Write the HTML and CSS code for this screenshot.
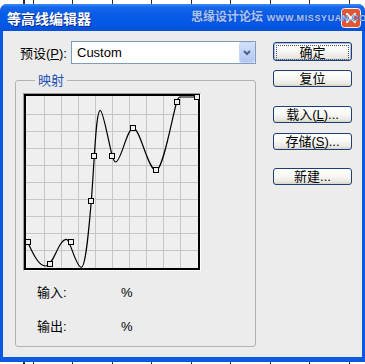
FILE: index.html
```html
<!DOCTYPE html>
<html lang="zh-CN">
<head>
  <meta charset="UTF-8">
  <title>等高线编辑器</title>
  <link rel="stylesheet" href="styles.css">
</head>
<body>
  <div class="window">
    <div class="titlebar">
      <span class="title">等高线编辑器</span>
      <span class="close">
        <svg width="20" height="20" viewBox="0 0 20 20">
          <rect x="0.5" y="0.5" width="19" height="19" rx="3" fill="#E2572F" stroke="#F4F4F4"/>
          <path d="M6 6 L14 14 M14 6 L6 14" stroke="#fff" stroke-width="2.2" stroke-linecap="round"/>
        </svg>
      </span>
      <span class="watermark">思缘设计论坛 <small>WWW.MISSYUAN.COM</small></span>
    </div>

    <div class="client">
      <div class="main">
        <div class="preset">
          <label>预设(<u>P</u>):</label>
          <div class="combo">
            <span>Custom</span>
            <span class="combo-arrow">
              <svg width="16" height="21" viewBox="0 0 16 21">
                <defs>
                  <linearGradient id="arrowbg" x1="0" y1="0" x2="0" y2="1">
                    <stop offset="0" stop-color="#D3E0FC"/>
                    <stop offset="1" stop-color="#B2C6F4"/>
                  </linearGradient>
                </defs>
                <rect x="0.5" y="0.5" width="15" height="20" rx="2" fill="url(#arrowbg)" stroke="#C9D8F8"/>
                <path d="M5 9 L8 12 L11 9" fill="none" stroke="#4D6185" stroke-width="2"/>
              </svg>
            </span>
          </div>
        </div>

        <fieldset class="mapping">
          <legend>映射</legend>
          <div class="graph">
            <svg width="176" height="176" viewBox="0 0 176 176">
              <rect x="1" y="1" width="174" height="174" fill="#EFEFEF" stroke="#000" stroke-width="2"/>
              <g stroke="#C6C6C6" stroke-width="1">
                <path d="M20.5 2V174 M37.5 2V174 M54.5 2V174 M71.5 2V174 M88.5 2V174 M105.5 2V174 M122.5 2V174 M139.5 2V174 M156.5 2V174"/>
                <path d="M2 20.5H174 M2 37.5H174 M2 54.5H174 M2 71.5H174 M2 88.5H174 M2 105.5H174 M2 122.5H174 M2 139.5H174 M2 156.5H174"/>
              </g>
              <path fill="none" stroke="#000" stroke-width="1.2"
                d="M3.7,148.3 C8,157 14,172 21.5,172 C30,172 34,145.3 42.7,145.3 C46,145.3 52,173.3 57.3,173.3 C61.5,173.3 64.5,140 67.3,106.7 C68.5,92 69.3,77 70.3,62.3 C71.5,44 73,16.3 76.3,16.3 C79,16.3 84,45 88.3,62.3 C89.5,66 90.3,68 91.7,68 C97,68 103,34 109.3,34 C116,34 124,76.3 132,76.3 C139,76.3 148,24 152.7,8 C153.7,5 154.5,3 156,3 L173,3"/>
              <g fill="#EFEFEF" stroke="#000" stroke-width="1">
                <rect x="1.5" y="145.5" width="5" height="5"/>
                <rect x="23.5" y="167.5" width="5" height="5"/>
                <rect x="44.5" y="145.5" width="5" height="5"/>
                <rect x="64.5" y="104.5" width="5" height="5"/>
                <rect x="67.5" y="59.5" width="5" height="5"/>
                <rect x="85.5" y="59.5" width="5" height="5"/>
                <rect x="106.5" y="31.5" width="5" height="5"/>
                <rect x="129.5" y="73.5" width="5" height="5"/>
                <rect x="150.5" y="5.5" width="5" height="5"/>
                <rect x="170.5" y="0.5" width="5" height="5"/>
              </g>
            </svg>
          </div>
          <div class="readout">
            <span>输入:</span><span>%</span>
            <span>输出:</span><span>%</span>
          </div>
        </fieldset>
      </div>

      <div class="buttons">
        <button class="btn btn-default"><span>确定</span></button>
        <button class="btn btn-reset">复位</button>
        <button class="btn btn-load">载入(<u>L</u>)...</button>
        <button class="btn btn-save">存储(<u>S</u>)...</button>
        <button class="btn btn-new">新建...</button>
      </div>
    </div>
  </div>
</body>
</html>
```

FILE: styles.css
```css
html,
body {
  margin: 0;
}

body {
  width: 365px;
  height: 364px;
  overflow: hidden;
  background: repeating-linear-gradient(90deg, #2a2a2a 0 1px, #fff 1px 39.5px);
  background-position: 33px 0;
  font-family: "Liberation Sans", "Noto Sans CJK SC", sans-serif;
  font-size: 13px;
  color: #000;
}

.window {
  box-sizing: border-box;
  width: 365px;
  height: 358px;
  margin-top: 4px;
  padding: 0 3px 5px;
  background: #0A5BE2;
  border-radius: 7px 7px 0 0;
  display: flex;
  flex-direction: column;
}

.titlebar {
  position: relative;
  height: 27px;
  margin: 0 -3px;
  padding: 0 4px 0 7px;
  display: flex;
  align-items: center;
  border-radius: 7px 7px 0 0;
  background: linear-gradient(to bottom, #3C8DF6 0, #1668EC 3px, #0A5DE6 10px, #0558E4 20px, #0350DA 27px);
}

.title {
  flex: 1;
  color: #fff;
  font-family: "Noto Sans CJK SC", sans-serif;
  font-size: 14px;
  font-weight: bold;
  line-height: 16px;
  text-shadow: 1px 1px 0 #0A2C8A;
}

.close {
  display: flex;
  margin-top: 1px;
}

.watermark {
  position: absolute;
  left: 191px;
  top: 4px;
  color: #A9C5F6;
  font-family: "Noto Sans CJK SC", sans-serif;
  font-size: 12px;
  font-weight: bold;
  line-height: 16px;
  white-space: nowrap;
  text-shadow: 0 0 1px #1B47B5, 0 0 1px #1B47B5;
}

.watermark small {
  font-family: "Liberation Sans", sans-serif;
  font-size: 9px;
  letter-spacing: 0.6px;
  margin-left: 1px;
}

.client {
  flex: 1;
  display: flex;
  gap: 17px;
  padding: 10px 0 0 12px;
  background: #ECECEC;
}

.main {
  width: 241px;
  display: flex;
  flex-direction: column;
}

.preset {
  display: flex;
  align-items: center;
  height: 23px;
  padding-left: 5px;
}

.preset label {
  width: 51px;
  flex-shrink: 0;
}

.combo {
  box-sizing: border-box;
  width: 185px;
  height: 23px;
  display: flex;
  align-items: center;
  padding-left: 5px;
  border: 1px solid #7F9DB9;
  background: #fff;
}

.combo-arrow {
  display: flex;
  margin-left: auto;
}

.mapping {
  margin: 10px 0 0;
  padding: 0 0 11px 7px;
  border: 1px solid #B3B3AC;
  border-radius: 3px;
}

.mapping legend {
  margin-left: 12px;
  padding: 0 3px;
  color: #1E50B3;
  line-height: 13px;
}

.graph {
  width: 176px;
  height: 176px;
  margin-top: 6px;
  border: 1px solid;
  border-color: #9C9C9C #fff #fff #9C9C9C;
}

.graph svg {
  display: block;
}

.readout {
  display: grid;
  grid-template-columns: 84px auto;
  row-gap: 18px;
  margin-top: 14px;
  padding-left: 14px;
  line-height: 16px;
}

.buttons {
  width: 79px;
  display: flex;
  flex-direction: column;
  padding-top: 1px;
}

.btn {
  box-sizing: border-box;
  height: 17px;
  padding: 0;
  font: inherit;
  line-height: 15px;
  color: #000;
  border: 1px solid #1C3F78;
  border-radius: 3px;
  background: linear-gradient(to bottom, #fff 0, #F7F7F4 50%, #E9E7E0 85%, #D6D2C8 100%);
}

.btn-default {
  height: 19px;
  padding: 2px;
  box-shadow: inset 0 0 0 1px #A9C3EE;
}

.btn-default span {
  display: block;
  height: 13px;
  line-height: 13px;
  border: 1px dotted #555;
}

.btn-reset {
  margin-top: 9px;
}

.btn-load {
  margin-top: 19px;
}

.btn-save {
  margin-top: 10px;
}

.btn-new {
  margin-top: 18px;
}
```
